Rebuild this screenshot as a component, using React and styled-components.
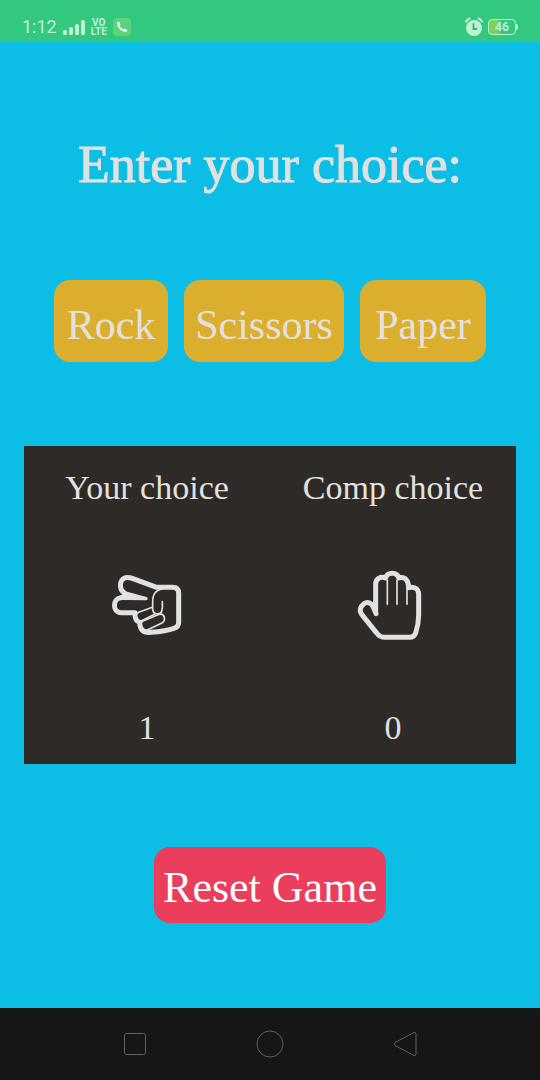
import React, { useState } from "react";
import styled, { createGlobalStyle } from "styled-components";

const GlobalStyle = createGlobalStyle`
  * { box-sizing: border-box; }
  body {
    margin: 0;
    background: #0cbde5;
    color: #e3e1df;
    font-family: "Liberation Serif", serif;
  }
`;

const Screen = styled.div`
  display: flex;
  flex-direction: column;
  min-height: 100vh;
`;

const StatusBar = styled.header`
  display: flex;
  align-items: flex-end;
  justify-content: space-between;
  height: 42px;
  padding: 0 24px 4px 22px;
  background: #33c880;
  color: #c0f0d4;
  font-family: Roboto, sans-serif;
`;

const StatusGroup = styled.div`
  display: flex;
  align-items: center;
  gap: 5px;
  height: 22px;
`;

const Clock = styled.span`
  font-size: 18px;
  line-height: 22px;
`;

const Volte = styled.span`
  display: flex;
  flex-direction: column;
  align-items: center;
  font-size: 10px;
  font-weight: 700;
  line-height: 9px;
`;

const Battery = styled.span`
  position: relative;
  width: 28px;
  height: 16px;
  border: 1px solid #c0f0d4;
  border-radius: 4px;
  background: linear-gradient(90deg, #7fd35d 30%, transparent 50%);
  font-size: 12px;
  font-weight: 700;
  line-height: 14px;
  text-align: center;

  &::after {
    content: "";
    position: absolute;
    top: 4px;
    right: -3px;
    width: 2px;
    height: 6px;
    border-radius: 0 2px 2px 0;
    background: #c0f0d4;
  }
`;

const Game = styled.main`
  display: flex;
  flex: 1;
  flex-direction: column;
  align-items: center;
  justify-content: space-evenly;
  padding: 0 24px 2px;
`;

const Title = styled.h1`
  margin: 0;
  padding-top: 8px;
  font-size: 52px;
  font-weight: 400;
  line-height: 64px;
  white-space: nowrap;
  -webkit-text-stroke: 1px currentColor;
`;

const Choices = styled.div`
  display: flex;
  gap: 16px;
  width: 100%;
  padding: 0 30px;
`;

const Button = styled.button`
  border: 0;
  border-radius: 16px;
  font-family: inherit;
  white-space: nowrap;
  cursor: pointer;
`;

const ChoiceButton = styled(Button)`
  flex: ${({ $share }) => $share} 1 0;
  height: 82px;
  padding: 8px 0 0;
  background: #dcae2d;
  color: #e3e1df;
  font-size: 42px;
`;

const ResetButton = styled(Button)`
  height: 76px;
  padding: 6px 9px 0;
  background: #eb3d5c;
  color: #fff;
  font-size: 44px;
`;

const Board = styled.section`
  display: grid;
  grid-template-columns: 1fr 1fr;
  width: 100%;
  background: #2e2a28;
`;

const Player = styled.div`
  display: flex;
  flex-direction: column;
  align-items: center;
  gap: 54px;
  padding: 21px 0 15px;
`;

const PlayerText = styled.p`
  margin: 0;
  font-size: 34px;
  line-height: 42px;
  white-space: nowrap;
`;

const HandSvg = styled.svg`
  width: 100px;
  height: 90px;
  fill: none;
  stroke: #e3e1df;
  stroke-width: 15;
  stroke-linecap: round;
  stroke-linejoin: round;
`;

const NavBar = styled.nav`
  display: grid;
  grid-template-columns: repeat(3, 25%);
  align-items: center;
  justify-content: center;
  justify-items: center;
  height: 72px;
  background: #161616;
`;

const NavButton = styled.button`
  display: flex;
  padding: 0;
  border: 0;
  background: none;
  cursor: pointer;

  svg {
    fill: none;
    stroke: #606060;
  }
`;

const ScissorsHand = () => (
  <HandSvg viewBox="-9 6 300 270" role="img" aria-label="Scissors">
    <path d="M170 79H218Q236 79 236 97V184Q236 198 222 202C202 209 177 212 153 214C133 216 123 209 120 194L119 184C108 181 104 173 105 155H63C37 155 37 113 62 110L80 107L72 95C57 85 58 58 74 51C82 47 91 50 99 53Z" />
    <path d="M72 95L138 113L68 112Z" fill="#e3e1df" strokeWidth="10" />
    <g strokeWidth="5">
      <path d="M188 83C164 89 158 101 158 124V145C160 162 182 162 185 151C188 142 188 133 187 122" />
      <path d="M157 139L116 154C103 160 107 181 122 181L164 160" />
      <path d="M178 160C194 157 199 178 186 186L142 207C123 210 116 188 129 180L178 160" />
    </g>
  </HandSvg>
);

const PaperHand = () => (
  <HandSvg viewBox="-6 6 300 270" role="img" aria-label="Paper">
    <path d="M92 151V69C92 54 105 45 122 51C125 32 158 32 161 51C177 45 190 55 191 80C207 75 221 83 221 100V162C221 181 217 201 212 216C209 225 204 229 194 229H120C108 229 101 225 94 215L50 160C42 149 46 136 57 128C68 121 79 126 84 136L93 158" />
    <path d="M127 58V130M156 58V130M186 76V130" strokeWidth="5" />
  </HandSvg>
);

const hands = { Rock: ScissorsHand, Scissors: ScissorsHand, Paper: PaperHand };
const options = [
  { name: "Rock", share: 114 },
  { name: "Scissors", share: 160 },
  { name: "Paper", share: 126 },
];

const PlayerColumn = ({ label, choice, score }) => {
  const Hand = hands[choice];
  return (
    <Player>
      <PlayerText>{label}</PlayerText>
      <Hand />
      <PlayerText>{score}</PlayerText>
    </Player>
  );
};

export default function App() {
  const [choice, setChoice] = useState("Scissors");
  const [scores, setScores] = useState([1, 0]);

  return (
    <>
      <GlobalStyle />
      <Screen>
        <StatusBar>
          <StatusGroup>
            <Clock>1:12</Clock>
            <svg width="24" height="18" viewBox="0 0 24 18" fill="currentColor" aria-hidden="true">
              <rect x="1" y="12" width="4" height="5" rx="1.5" />
              <rect x="7" y="9" width="4" height="8" rx="1.5" />
              <rect x="13" y="6" width="4" height="11" rx="1.5" />
              <rect x="19" y="2" width="4" height="15" rx="1.5" />
            </svg>
            <Volte>
              <span>VO</span>
              <span>LTE</span>
            </Volte>
            <svg width="20" height="18" viewBox="0 0 20 18" aria-hidden="true">
              <rect x="1" width="18" height="18" rx="4" fill="#5bd37c" />
              <path d="M5.2 4.1 7 3.7 8.6 6.6 7.5 8Q9 10.3 11.6 11.5L12.8 10.4 15.4 11.9Q15.3 13.8 13.5 14C9 13.7 5 9 5 5.3Z" fill="#effff4" />
            </svg>
          </StatusGroup>
          <StatusGroup>
            <svg width="18" height="20" viewBox="0 0 18 20" fill="none" stroke="currentColor" strokeLinecap="round" aria-hidden="true">
              <circle cx="9" cy="11" r="8" fill="currentColor" stroke="none" />
              <path d="M1 4.5Q2 2.5 4.5 1.5M13.5 1.5Q16 2.5 17 4.5" strokeWidth="2" />
              <path d="M8.5 7V12H11.5" stroke="#33b875" strokeWidth="1.8" />
            </svg>
            <Battery>46</Battery>
          </StatusGroup>
        </StatusBar>
        <Game>
          <Title>Enter your choice:</Title>
          <Choices>
            {options.map(({ name, share }) => (
              <ChoiceButton key={name} $share={share} onClick={() => setChoice(name)}>
                {name}
              </ChoiceButton>
            ))}
          </Choices>
          <Board>
            <PlayerColumn label="Your choice" choice={choice} score={scores[0]} />
            <PlayerColumn label="Comp choice" choice="Paper" score={scores[1]} />
          </Board>
          <ResetButton onClick={() => setScores([0, 0])}>Reset Game</ResetButton>
        </Game>
        <NavBar>
          <NavButton aria-label="Recent apps">
            <svg width="24" height="24" viewBox="0 0 24 24">
              <rect x="1.5" y="1.5" width="21" height="21" rx="2" />
            </svg>
          </NavButton>
          <NavButton aria-label="Home">
            <svg width="28" height="28" viewBox="0 0 28 28">
              <circle cx="14" cy="14" r="13" />
            </svg>
          </NavButton>
          <NavButton aria-label="Back">
            <svg width="24" height="26" viewBox="0 0 24 26">
              <path d="M21 1.5Q23 .5 23 3V23Q23 25.5 21 24.5L2 14.5Q0 13 2 11.5Z" />
            </svg>
          </NavButton>
        </NavBar>
      </Screen>
    </>
  );
}
